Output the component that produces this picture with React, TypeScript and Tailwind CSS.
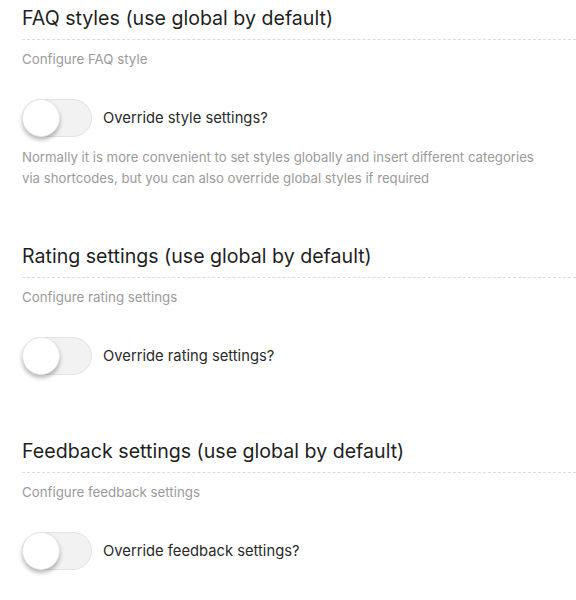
import React from "react";

function Toggle() {
  return (
    <div className="relative h-[38px] w-[70px] shrink-0 rounded-full border border-[#e3e3e3] bg-[#f2f2f2]">
      <div className="absolute left-[-1px] top-[-1px] h-[38px] w-[38px] rounded-full border border-[#e6e6e6] bg-white shadow-[0_3px_4px_rgba(0,0,0,0.28)]" />
    </div>
  );
}

function Section({
  title,
  desc,
  label,
  note,
  last,
}: {
  title: string;
  desc: string;
  label: string;
  note?: string[];
  last?: boolean;
}) {
  return (
    <section className={last ? "" : note ? "pb-[55px]" : "pb-[64px]"}>
      <h2 className="border-b border-dashed border-[#dcdcdc] pb-[9px] text-[19.6px] leading-[24px] text-[#1f1f1f]">
        {title}
      </h2>
      <p className="mt-[9px] text-[13.3px] leading-[20px] text-[#9b9b9b]">{desc}</p>
      <div className="mt-[30px] flex items-center gap-[11px]">
        <Toggle />
        <span className="text-[14.75px] leading-[20px] text-[#2a2a2a]">{label}</span>
      </div>
      {note && (
        <p className="mt-[10px] text-[13.2px] leading-[21px] text-[#9b9b9b]">
          {note[0]}
          <br />
          {note[1]}
        </p>
      )}
    </section>
  );
}

export default function App() {
  return (
    <div
      className="min-h-[600px] w-[576px] bg-white pl-[22px] pt-[6px]"
      style={{ fontFamily: "Inter, 'Noto Sans', sans-serif" }}
    >
      <Section
        title="FAQ styles (use global by default)"
        desc="Configure FAQ style"
        label="Override style settings?"
        note={[
          "Normally it is more convenient to set styles globally and insert different categories",
          "via shortcodes, but you can also override global styles if required",
        ]}
      />
      <Section
        title="Rating settings (use global by default)"
        desc="Configure rating settings"
        label="Override rating settings?"
      />
      <Section
        title="Feedback settings (use global by default)"
        desc="Configure feedback settings"
        label="Override feedback settings?"
        last
      />
    </div>
  );
}
